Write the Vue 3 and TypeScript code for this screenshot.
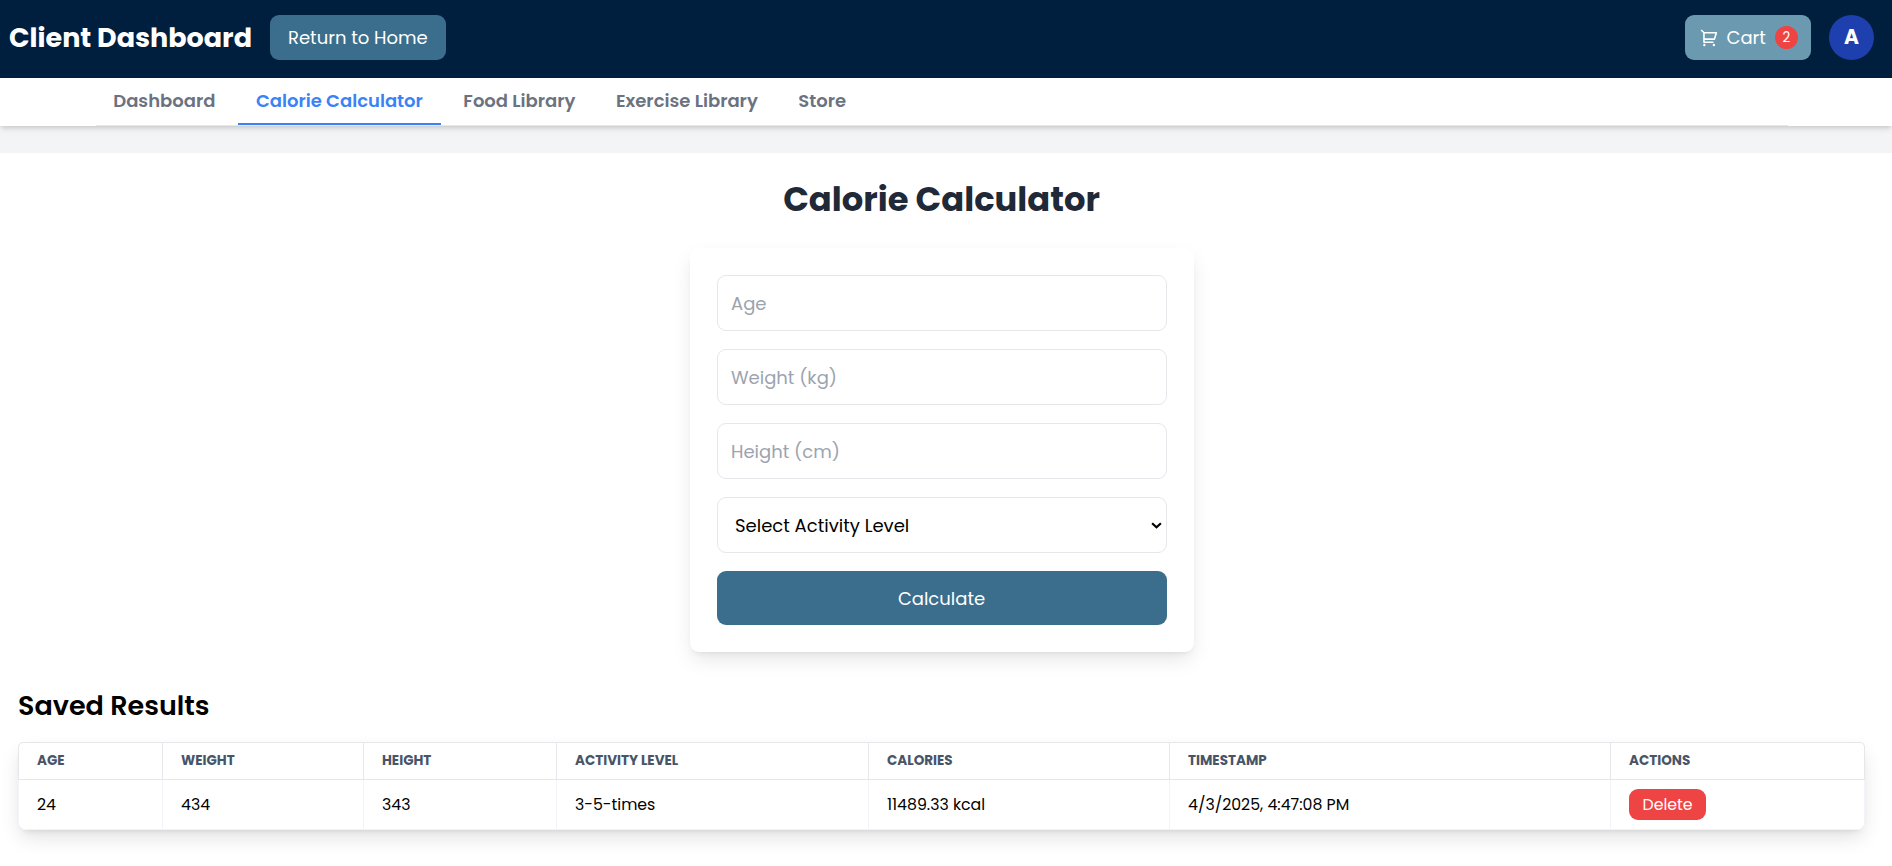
<script setup lang="ts">
import { ref } from 'vue'

interface Tab {
  label: string
  key: string
}

interface Result {
  age: number
  weight: number
  height: number
  activity: string
  calories: string
  timestamp: string
}

const tabs: Tab[] = [
  { label: 'Dashboard', key: 'dashboard' },
  { label: 'Calorie Calculator', key: 'calculator' },
  { label: 'Food Library', key: 'food' },
  { label: 'Exercise Library', key: 'exercise' },
  { label: 'Store', key: 'store' },
]
const activeTab = ref('calculator')

const age = ref('')
const weight = ref('')
const height = ref('')

const columns = ['AGE', 'WEIGHT', 'HEIGHT', 'ACTIVITY LEVEL', 'CALORIES', 'TIMESTAMP', 'ACTIONS']

const results = ref<Result[]>([
  {
    age: 24,
    weight: 434,
    height: 343,
    activity: '3-5-times',
    calories: '11489.33 kcal',
    timestamp: '4/3/2025, 4:47:08 PM',
  },
])

function removeResult(index: number): void {
  results.value.splice(index, 1)
}
</script>

<template>
  <div class="page">
    <header class="topbar">
      <div class="brand">
        <h1 class="brand-title">Client Dashboard</h1>
        <button class="home-btn" type="button">Return to Home</button>
      </div>
      <div class="account">
        <button class="cart-btn" type="button">
          <svg class="cart-icon" viewBox="0 0 24 24" fill="currentColor" aria-hidden="true">
            <path
              d="M4 6.414.757 3.172l1.415-1.415L5.414 5h15.242a1 1 0 0 1 .958 1.287l-2.4 8a1 1 0 0 1-.958.713H6v2h11v2H5a1 1 0 0 1-1-1V6.414zM6 7v6h11.512l1.8-6H6zm-.5 16a1.5 1.5 0 1 1 0-3 1.5 1.5 0 0 1 0 3zm12 0a1.5 1.5 0 1 1 0-3 1.5 1.5 0 0 1 0 3z"
            />
          </svg>
          <span>Cart</span>
          <span class="cart-count">2</span>
        </button>
        <div class="avatar">A</div>
      </div>
    </header>

    <nav class="nav">
      <div class="tabs">
        <button
          v-for="tab in tabs"
          :key="tab.key"
          type="button"
          class="tab"
          :class="{ active: activeTab === tab.key }"
          @click="activeTab = tab.key"
        >
          {{ tab.label }}
        </button>
      </div>
    </nav>

    <main class="content">
      <h2 class="heading">Calorie Calculator</h2>
      <form class="card" @submit.prevent>
        <input v-model="age" class="field" type="text" placeholder="Age" />
        <input v-model="weight" class="field" type="text" placeholder="Weight (kg)" />
        <input v-model="height" class="field" type="text" placeholder="Height (cm)" />
        <div class="field select">
          <span>Select Activity Level</span>
          <svg class="chevron" viewBox="0 0 10 6" aria-hidden="true">
            <path d="M1 1l4 3.6L9 1" fill="none" stroke="#000" stroke-width="2" />
          </svg>
        </div>
        <button class="submit" type="submit">Calculate</button>
      </form>

      <section class="saved">
        <h3 class="saved-title">Saved Results</h3>
        <div class="grid">
          <div class="row head">
            <div v-for="column in columns" :key="column" class="cell">{{ column }}</div>
          </div>
          <div v-for="(r, i) in results" :key="i" class="row body">
            <div class="cell">{{ r.age }}</div>
            <div class="cell">{{ r.weight }}</div>
            <div class="cell">{{ r.height }}</div>
            <div class="cell">{{ r.activity }}</div>
            <div class="cell">{{ r.calories }}</div>
            <div class="cell">{{ r.timestamp }}</div>
            <div class="cell">
              <button class="delete" type="button" @click="removeResult(i)">Delete</button>
            </div>
          </div>
        </div>
      </section>
    </main>
  </div>
</template>

<style>
html,
body {
  margin: 0;
  background: #fff;
}
</style>

<style scoped>
.page,
.page * {
  box-sizing: border-box;
}
.page {
  height: 866px;
  overflow: hidden;
  background: #f3f4f6;
  font-family: Poppins, Inter, 'Liberation Sans', sans-serif;
  font-size: 18px;
  line-height: 27px;
  color: #000;
}
button,
input {
  font: inherit;
  border: 0;
  margin: 0;
  white-space: nowrap;
}
h1,
h2,
h3 {
  margin: 0;
}

/* Top bar */
.topbar {
  display: flex;
  justify-content: space-between;
  align-items: flex-start;
  height: 78px;
  padding: 15px 18px 0 9px;
  background: #001f3f;
  color: #fff;
}
.brand,
.account {
  display: flex;
  align-items: center;
  gap: 18px;
}
.brand-title {
  font-size: 27px;
  line-height: 36px;
  font-weight: 700;
  white-space: nowrap;
}
.home-btn {
  height: 45px;
  padding: 0 18px;
  border-radius: 9px;
  background: #3b6e8c;
  color: #fff;
}
.cart-btn {
  display: flex;
  align-items: center;
  width: 126px;
  height: 45px;
  padding: 0 13px 0 14.5px;
  border-radius: 9px;
  background: #6b9ab0;
  color: #fff;
}
.cart-icon {
  width: 19px;
  height: 19px;
  margin-right: 8px;
}
.cart-count {
  width: 23px;
  height: 23px;
  margin-left: auto;
  border-radius: 50%;
  background: #ef4444;
  font-size: 13.5px;
  line-height: 23px;
  text-align: center;
}
.avatar {
  width: 45px;
  height: 45px;
  border-radius: 50%;
  background: #1e40af;
  font-size: 20.25px;
  line-height: 45px;
  font-weight: 700;
  text-align: center;
}

/* Tabs */
.nav {
  height: 48px;
  padding: 0 104px 0 96px;
  background: #fff;
  box-shadow:
    0 4px 6px -1px rgba(0, 0, 0, 0.1),
    0 2px 4px -1px rgba(0, 0, 0, 0.1);
}
.tabs {
  display: flex;
  gap: 4.5px;
  height: 48px;
  border-bottom: 1px solid #e5e7eb;
}
.tab {
  height: 47px;
  padding: 0 18px;
  border-bottom: 2px solid transparent;
  background: none;
  color: #6b7280;
  font-weight: 600;
}
.tab:first-child {
  padding-left: 17.25px;
}
.tab.active {
  border-bottom-color: #3b82f6;
  color: #3b82f6;
}

/* Content */
.content {
  display: flex;
  flex-direction: column;
  align-items: center;
  height: 713px;
  margin-top: 27px;
  padding: 27px 27px 0 18px;
  background: #fff;
}
.heading {
  height: 68px;
  font-size: 33.75px;
  line-height: 39px;
  font-weight: 700;
  color: #1f2937;
}
.card {
  display: flex;
  flex-direction: column;
  gap: 18px;
  width: 504px;
  height: 404px;
  padding: 27px;
  border-radius: 9px;
  background: #fff;
  box-shadow:
    0 9px 20px -2px rgba(0, 0, 0, 0.1),
    0 4px 6px -4px rgba(0, 0, 0, 0.1);
}
.field {
  width: 100%;
  height: 56px;
  padding: 0 13.5px;
  border: 1px solid #e5e7eb;
  border-radius: 9px;
  background: #fff;
  color: #000;
}
.field::placeholder {
  color: #9ca3af;
  opacity: 1;
}
.select {
  display: flex;
  align-items: center;
  justify-content: space-between;
  padding: 0 4px 0 17.5px;
}
.chevron {
  width: 11px;
  height: 7px;
}
.submit {
  height: 54px;
  border-radius: 9px;
  background: #3b6e8c;
  color: #fff;
}

/* Saved results */
.saved {
  align-self: stretch;
  margin-top: 36px;
}
.saved-title {
  font-size: 27px;
  line-height: 36px;
  font-weight: 600;
}
.grid {
  margin-top: 18px;
  border-radius: 9px;
  background: #fff;
  box-shadow:
    0 9px 20px -2px rgba(0, 0, 0, 0.12),
    0 4px 6px -4px rgba(0, 0, 0, 0.12);
}
.row {
  display: grid;
  grid-template-columns: 145px 201px 193px 312px 301px 441px 1fr;
}
.cell {
  display: flex;
  align-items: center;
  padding-left: 18px;
  border-right: 1px solid #e5e7eb;
}
.cell:first-child {
  border-left: 1px solid #e5e7eb;
}
.head {
  height: 38px;
}
.head .cell {
  padding-bottom: 1px;
  border-top: 1px solid #e5e7eb;
  border-bottom: 1px solid #e5e7eb;
  color: #475569;
  font-size: 13.5px;
  font-weight: 700;
}
.head .cell:first-child {
  border-top-left-radius: 5px;
}
.head .cell:last-child {
  border-top-right-radius: 5px;
}
.body {
  height: 50px;
}
.body .cell {
  border-color: #f1f5f9;
  border-bottom: 1px solid #f1f5f9;
  font-size: 15.75px;
}
.body .cell:first-child {
  border-bottom-left-radius: 5px;
}
.body .cell:last-child {
  border-bottom-right-radius: 5px;
}
.delete {
  height: 31px;
  padding: 0 13.5px;
  border-radius: 9px;
  background: #ef4444;
  color: #fff;
}
</style>
